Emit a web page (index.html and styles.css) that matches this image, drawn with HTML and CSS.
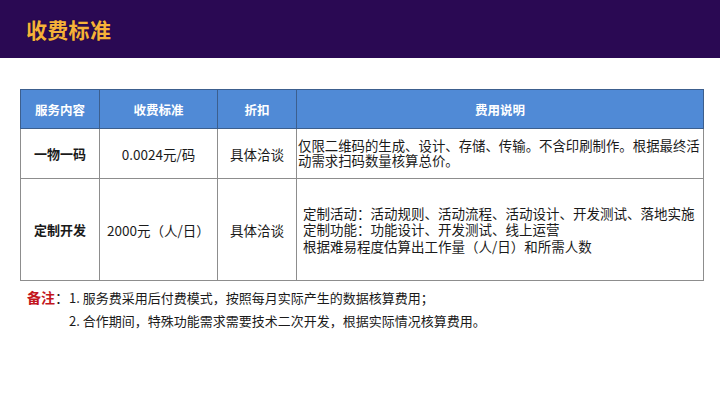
FILE: index.html
```html
<!DOCTYPE html>
<html lang="zh-CN">
<head>
<meta charset="utf-8">
<link rel="stylesheet" href="styles.css">
</head>
<body>
<header class="topbar">
  <h1 class="title">收费标准</h1>
</header>
<main class="content">
  <table class="fees">
    <colgroup>
      <col class="c1"><col class="c2"><col class="c3"><col class="c4">
    </colgroup>
    <thead>
      <tr>
        <th>服务内容</th>
        <th>收费标准</th>
        <th>折扣</th>
        <th>费用说明</th>
      </tr>
    </thead>
    <tbody>
      <tr class="r1">
        <td class="name">一物一码</td>
        <td>0.0024元/码</td>
        <td>具体洽谈</td>
        <td class="desc tight">仅限二维码的生成、设计、存储、传输。不含印刷制作。根据最终活动需求扫码数量核算总价。</td>
      </tr>
      <tr class="r2">
        <td class="name">定制开发</td>
        <td>2000元（人/日）</td>
        <td>具体洽谈</td>
        <td class="desc pad">
          <div class="ln">定制活动：活动规则、活动流程、活动设计、开发测试、落地实施</div>
          <div class="ln">定制功能：功能设计、开发测试、线上运营</div>
          <div class="ln">根据难易程度估算出工作量（人/日）和所需人数</div>
        </td>
      </tr>
    </tbody>
  </table>
  <div class="notes">
    <span class="label"><b>备注</b>：</span>
    <div class="lines">
      <p>1. 服务费采用后付费模式，按照每月实际产生的数据核算费用；</p>
      <p>2. 合作期间，特殊功能需求需要技术二次开发，根据实际情况核算费用。</p>
    </div>
  </div>
</main>
</body>
</html>
```
FILE: styles.css
```css
html, body {
  margin: 0;
  padding: 0;
  background: #ffffff;
  font-family: "Noto Sans CJK SC", "Noto Sans", sans-serif;
  color: #1a1a1a;
}
.topbar {
  height: 58px;
  background: #2a0953;
  display: flex;
  align-items: center;
  padding-left: 26px;
  box-sizing: border-box;
}
.title {
  margin: 0;
  font-size: 21px;
  font-weight: 700;
  color: #f6b23a;
  letter-spacing: 0.3px;
  line-height: 1;
  text-shadow: 0 0 1px rgba(0,0,0,0.6);
}
.content {
  padding: 31px 17px 0 20px;
}
.fees {
  border-collapse: collapse;
  table-layout: fixed;
  width: 683px;
}
.c1 { width: 79px; }
.c2 { width: 118px; }
.c3 { width: 79px; }
.c4 { width: 407px; }
.fees th {
  background: #508ad6;
  color: #ffffff;
  font-size: 12.5px;
  font-weight: 700;
  height: 38px;
  padding: 0;
  border: 1px solid #3c5f8e;
  text-align: center;
}
.fees td {
  border: 1px solid #8d8d8d;
  font-size: 13.5px;
  text-align: center;
  vertical-align: middle;
  padding: 0;
  line-height: 16px;
}
.fees .name {
  font-weight: 700;
  font-size: 13px;
}
.r1 td { height: 47px; }
.r2 td { height: 101px; }
.fees .desc {
  text-align: left;
}
.fees .tight {
  padding: 0 0 2px 1px;
  font-size: 13.4px;
  line-height: 15px;
}
.fees .pad {
  padding-left: 6px;
}
.ln {
  line-height: 16.5px;
}
.notes {
  display: flex;
  margin-top: 5px;
  padding-left: 7px;
  font-size: 13px;
  line-height: 23px;
}
.label {
  width: 42px;
  flex: none;
  font-size: 14px;
  color: #1a1a1a;
}
.label b {
  color: #c3161d;
  font-weight: 700;
}
.lines p {
  margin: 0;
}
```
